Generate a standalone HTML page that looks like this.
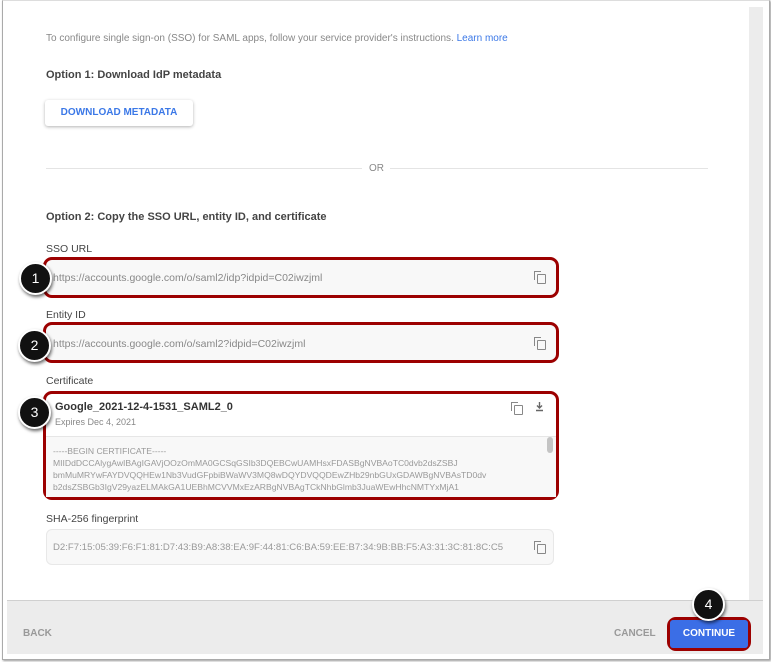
<!DOCTYPE html>
<html><head><style>
body{margin:0;width:771px;height:662px;background:#fff;position:relative;overflow:hidden;font-family:"Liberation Sans",sans-serif;}
.a{position:absolute;}
.frame{left:2px;top:0;width:766px;height:658px;border:1px solid #aaa;border-top:1px solid #ddd;box-shadow:1px 1px 2px #999;}
.t{font-size:10.5px;color:#888;}
.h{font-size:11px;color:#444;font-weight:bold;}
.lbl{font-size:10.5px;color:#444;}
.field{background:#f8f8f8;border-radius:6px;}
.red{border:3.5px solid #9c0000;border-radius:9px;box-sizing:border-box;}
.circ{width:29px;height:29px;border-radius:50%;background:#111;border:2px solid #fff;box-shadow:1px 2px 3px rgba(0,0,0,.6);color:#fff;font-size:14px;text-align:center;line-height:29px;}
.copy{width:7px;height:8px;border:1.3px solid #888;border-radius:1px;}
.copy:before{content:"";position:absolute;left:-4px;top:-4px;width:6px;height:8px;border-left:1.3px solid #888;border-top:1.3px solid #888;}
.cert{font-size:8.6px;color:#999;line-height:12px;}
</style></head><body>
<div class="a frame"></div>
<div class="a" style="left:749px;top:7px;width:14px;height:593px;background:#ececec;"></div>
<div class="a t" style="left:46px;top:33px;font-size:10px;">To configure single sign-on (SSO) for SAML apps, follow your service provider's instructions. <span style="color:#3b78e7">Learn more</span></div>
<div class="a h" style="left:46px;top:69px;">Option 1: Download IdP metadata</div>
<div class="a" style="left:45px;top:100px;width:148px;height:26px;border-radius:3px;box-shadow:0 1px 3px rgba(0,0,0,.3);color:#3b78e7;font-size:10px;font-weight:bold;text-align:center;line-height:26px;">DOWNLOAD METADATA</div>
<div class="a" style="left:46px;top:168px;width:316px;height:1px;background:#e4e4e4;"></div>
<div class="a" style="left:390px;top:168px;width:318px;height:1px;background:#e4e4e4;"></div>
<div class="a t" style="left:369px;top:163px;font-size:10px;color:#888;">OR</div>
<div class="a h" style="left:46px;top:211px;">Option 2: Copy the SSO URL, entity ID, and certificate</div>
<div class="a lbl" style="left:46px;top:243px;">SSO URL</div>
<div class="a field red" style="left:43px;top:257px;width:516px;height:41px;"></div>
<div class="a t" style="left:53px;top:272px;">https://accounts.google.com/o/saml2/idp?idpid=C02iwzjml</div>
<div class="a copy" style="left:537px;top:274px;"></div>
<div class="a lbl" style="left:46px;top:309px;">Entity ID</div>
<div class="a field red" style="left:43px;top:322px;width:516px;height:41px;"></div>
<div class="a t" style="left:53px;top:338px;">https://accounts.google.com/o/saml2?idpid=C02iwzjml</div>
<div class="a copy" style="left:537px;top:340px;"></div>
<div class="a lbl" style="left:46px;top:375px;">Certificate</div>
<div class="a red" style="left:43px;top:391px;width:516px;height:109px;background:#fff;"></div>
<div class="a" style="left:46px;top:436px;width:510px;height:60px;background:#f8f8f8;border-top:1px solid #e6e6e6;"></div>
<div class="a" style="left:547px;top:437px;width:6px;height:16px;background:#c4c4c4;border-radius:3px;"></div>
<div class="a" style="left:55px;top:401px;font-size:11px;font-weight:bold;color:#333;">Google_2021-12-4-1531_SAML2_0</div>
<div class="a" style="left:55px;top:417px;font-size:9px;color:#888;">Expires Dec 4, 2021</div>
<div class="a copy" style="left:514px;top:405px;"></div>
<svg class="a" style="left:535px;top:402px;" width="9" height="10" viewBox="0 0 9 10"><path d="M4.5 0v5.5M2 3.5l2.5 2.5 2.5-2.5M1 8.5h7" stroke="#666" stroke-width="1.4" fill="none"/></svg>
<div class="a cert" style="left:53px;top:445px;">-----BEGIN CERTIFICATE-----<br>MIIDdDCCAlygAwIBAgIGAVjOOzOmMA0GCSqGSIb3DQEBCwUAMHsxFDASBgNVBAoTC0dvb2dsZSBJ<br>bmMuMRYwFAYDVQQHEw1Nb3VudGFpbiBWaWV3MQ8wDQYDVQQDEwZHb29nbGUxGDAWBgNVBAsTD0dv<br>b2dsZSBGb3IgV29yazELMAkGA1UEBhMCVVMxEzARBgNVBAgTCkNhbGlmb3JuaWEwHhcNMTYxMjA1</div>
<div class="a lbl" style="left:46px;top:513px;">SHA-256 fingerprint</div>
<div class="a field" style="left:46px;top:529px;width:508px;height:36px;border:1px solid #e8e8e8;box-sizing:border-box;"></div>
<div class="a t" style="left:53px;top:542px;font-size:9.6px;color:#999;">D2:F7:15:05:39:F6:F1:81:D7:43:B9:A8:38:EA:9F:44:81:C6:BA:59:EE:B7:34:9B:BB:F5:A3:31:3C:81:8C:C5</div>
<div class="a copy" style="left:537px;top:544px;"></div>
<div class="a" style="left:7px;top:600px;width:756px;height:53px;background:#ececec;border-top:1px solid #d0d0d0;"></div>
<div class="a" style="left:23px;top:628px;font-size:10px;font-weight:bold;color:#999;">BACK</div>
<div class="a" style="left:614px;top:628px;font-size:10px;font-weight:bold;color:#999;">CANCEL</div>
<div class="a red" style="left:667px;top:617px;width:84px;height:34px;"></div>
<div class="a" style="left:670px;top:620px;width:78px;height:28px;background:#3b6ee6;border-radius:3px;color:#fff;font-size:10px;font-weight:bold;text-align:center;line-height:28px;">CONTINUE</div>
<div class="a circ" style="left:19px;top:262px;">1</div>
<div class="a circ" style="left:18px;top:329px;">2</div>
<div class="a circ" style="left:18px;top:396px;">3</div>
<div class="a circ" style="left:692px;top:588px;">4</div>
</body></html>
